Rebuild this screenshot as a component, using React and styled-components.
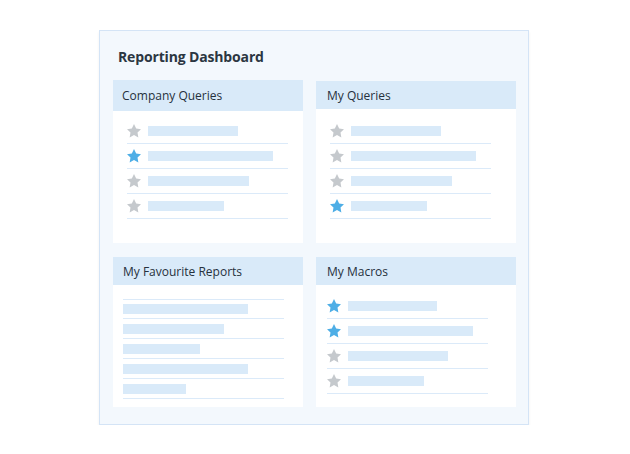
import React from 'react'
import styled, {createGlobalStyle} from 'styled-components';

const GlobalStyle = createGlobalStyle`
  html, body {
    margin: 0;
    padding: 0;
    background: #ffffff;
    font-family: "Open Sans", "Liberation Sans", sans-serif;
  }
  * { box-sizing: border-box; }
`;

const Panel = styled.div`
  margin: 30px 0 0 99px;
  width: 430px;
  height: 395px;
  background-color: #f3f8fd;
  border: 1px solid #d4e4f6;
  box-shadow: 0 2px 3px rgba(0, 0, 0, 0.06);
  padding: 0 11px 0 13px;
`;

const Title = styled.h1`
  margin: 0 0 13px 0;
  padding: 16px 0 0 5px;
  font-size: 14px;
  line-height: 20px;
  font-weight: 700;
  letter-spacing: -0.15px;
  color: #2b3642;
`;

const Grid = styled.div`
  display: grid;
  grid-template-columns: 190px 200px;
  grid-template-rows: 163px 150px;
  column-gap: 13px;
  row-gap: 14px;
`;

const Card = styled.div`
  background-color: #ffffff;
  display: flex;
  flex-direction: column;
  margin-top: ${p => p.$offset || 0}px;
`;

const Header = styled.div`
  height: ${p => p.$height}px;
  background-color: #d9eaf9;
  display: flex;
  align-items: center;
  padding-left: ${p => p.$pad}px;
  font-size: 12px;
  font-weight: 500;
  color: #26313d;
`;

const List = styled.div`
  padding: ${p => p.$top}px 0 0 ${p => p.$pad}px;
  display: flex;
  flex-direction: column;
`;

const Row = styled.div`
  width: 161px;
  height: ${p => p.$height}px;
  display: flex;
  align-items: center;
  gap: 7px;
  border-bottom: 1px solid #dbeaf9;
  ${p => p.$first && 'border-top: 1px solid #dbeaf9;'}
`;

const Bar = styled.div`
  height: 10px;
  background-color: #d9eaf9;
`;

const StarIcon = ({fav}) => (
  <svg width="14" height="14" viewBox="2.5 2.5 19 19" style={{flexShrink: 0}}>
    <path
      d="M12 2.5l2.95 6.1 6.55.9-4.75 4.6 1.15 6.6L12 17.55 6.1 20.7l1.15-6.6L2.5 9.5l6.55-.9L12 2.5z"
      fill={fav ? '#4eaee6' : '#c5c9cd'}
    />
  </svg>
);

const cards = [
  {title: 'Company Queries', header: 31, hpad: 9, top: 8, pad: 14, offset: 0,
    rows: [[false, 90], [true, 125], [false, 101], [false, 76]]},
  {title: 'My Queries', header: 28, hpad: 11, top: 10, pad: 14, offset: 1,
    rows: [[false, 90], [false, 125], [false, 101], [true, 76]]},
  {title: 'My Favourite Reports', header: 28, hpad: 10, top: 14, pad: 10, offset: 0, plain: true,
    rows: [[null, 125], [null, 101], [null, 77], [null, 125], [null, 63]]},
  {title: 'My Macros', header: 28, hpad: 11, top: 9, pad: 11, offset: 0,
    rows: [[true, 89], [true, 125], [false, 100], [false, 76]]},
];

const DashCard = ({card}) => (
  <Card $offset={card.offset}>
    <Header $height={card.header} $pad={card.hpad}>{card.title}</Header>
    <List $top={card.top} $pad={card.pad}>
      {card.rows.map(([fav, w], i) => (
        <Row key={i} $height={card.plain ? 20 : 25} $first={card.plain && i === 0}>
          {!card.plain && <StarIcon fav={fav}/>}
          <Bar style={{width: w}}/>
        </Row>
      ))}
    </List>
  </Card>
);

const App = () => {
  return (
    <>
      <GlobalStyle/>
      <Panel>
        <Title>Reporting Dashboard</Title>
        <Grid>
          {cards.map(c => <DashCard key={c.title} card={c}/>)}
        </Grid>
      </Panel>
    </>
  )
}

export default App
